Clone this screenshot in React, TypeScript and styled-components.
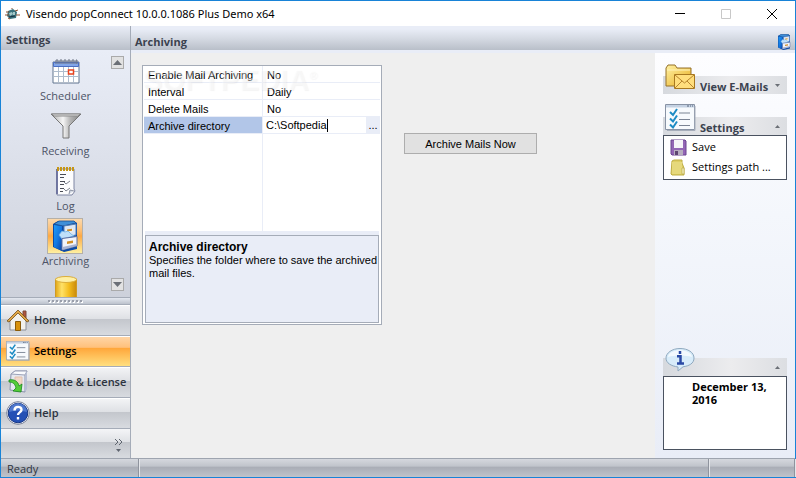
import React from "react";
import styled, { createGlobalStyle, css } from "styled-components";

const EDGE = "#a5acb8";
const PALE = "#e9edf7";

const GlobalStyle = createGlobalStyle`
  *, *::before, *::after { box-sizing: border-box; }
  body {
    margin: 0;
    font-family: "Open Sans", "Noto Sans", sans-serif;
    font-size: 11px;
    line-height: 14px;
    color: #000;
    background: #efefef;
  }
  button, input { font: inherit; color: inherit; margin: 0; padding: 0; border: 0; background: none; }
  h1, h2, h3, p { margin: 0; font: inherit; }
  svg { display: block; flex: none; }
`;

const Window = styled.div`
  display: flex;
  flex-direction: column;
  height: 100vh;
  border: 1px solid #1883d7;
  background: #efefef;
`;

const TitleBar = styled.header`
  display: flex;
  align-items: center;
  flex: none;
  height: 25px;
  padding-left: 4px;
  gap: 6px;
  background: #fff;
`;

const Title = styled.h1`
  && { flex: 1; font-family: "Noto Sans", sans-serif; font-size: 11px; line-height: 16px; }
`;

const ControlRow = styled.div`
  display: flex;
`;

const WindowButton = styled.button`
  display: grid;
  place-items: center;
  width: 46px;
  height: 25px;
  color: #000;
  &:disabled { color: #c8c8c8; }
`;

const Body = styled.div`
  display: flex;
  flex: 1;
  min-height: 0;
`;

const Sidebar = styled.nav`
  display: flex;
  flex-direction: column;
  flex: none;
  width: 130px;
  border-right: 1px solid ${EDGE};
`;

const barTone = "linear-gradient(#e9edf7, #d5dae3 45%, #b9bfc9)";

const SideHeader = styled.h2`
  && {
    flex: none;
    height: 24px;
    padding: 7px 5px 0;
    font-weight: 700;
    line-height: 14px;
    color: #3b424f;
    background: ${barTone};
  }
`;

const Shortcuts = styled.div`
  position: relative;
  flex: 1;
  min-height: 0;
  overflow: hidden;
  background: linear-gradient(#e9edf7, #cdd1db);
`;

const ShortcutList = styled.div`
  display: flex;
  flex-direction: column;
  align-items: center;
  gap: 5px;
  padding-top: 3px;
`;

const Shortcut = styled.button`
  display: flex;
  flex-direction: column;
  align-items: center;
  flex: none;
  color: #4d5467;
`;

const ShortcutIcon = styled.span<{ $on?: boolean }>`
  display: grid;
  place-items: center;
  width: 36px;
  height: 36px;
  border: 1px solid transparent;
  ${(p) =>
    p.$on &&
    css`
      border-color: #b5b0a8;
      background: linear-gradient(#fcd9ac, #fdbd71 35%, #fda944 50%, #fff0a0);
    `}
`;

const Scroller = styled.button<{ $end?: boolean }>`
  position: absolute;
  right: 6px;
  ${(p) => (p.$end ? "bottom: 6px;" : "top: 6px;")}
  display: grid;
  place-items: center;
  width: 13px;
  height: 13px;
  && { border: 1px solid #aaa; background: #e2e2e2; }
`;

const Splitter = styled.div`
  display: grid;
  place-items: center;
  flex: none;
  height: 8px;
  border-top: 1px solid ${EDGE};
  border-bottom: 1px solid ${EDGE};
  background: linear-gradient(#e4e8f0, #bcc2cc);
`;

const metal = "linear-gradient(#f4f5f7, #dfe1e5 45%, #c3c6cc 46%, #d8dbe0)";
const amber = "linear-gradient(#ffd7aa, #ffc17c 38%, #ffa63a 40%, #ffdf80)";

const NavButton = styled.button<{ $on?: boolean }>`
  && {
    display: flex;
    align-items: center;
    flex: none;
    gap: 4px;
    height: 31px;
    padding-left: 5px;
    border-bottom: 1px solid ${EDGE};
    font-weight: 600;
    text-align: left;
    white-space: nowrap;
    color: ${(p) => (p.$on ? "#000" : "#2c333f")};
    background: ${(p) => (p.$on ? amber : metal)};
    box-shadow: inset 0 1px #fff;
  }
`;

const Overflow = styled.div`
  display: flex;
  justify-content: flex-end;
  flex: none;
  height: 29px;
  padding: 5px 7px 0 0;
  background: ${metal};
`;

const Main = styled.main`
  display: flex;
  flex-direction: column;
  flex: 1;
  min-width: 0;
`;

const MainHeader = styled.div`
  display: flex;
  align-items: center;
  justify-content: space-between;
  flex: none;
  height: 27px;
  padding: 4px 3px 0 4px;
  border-top: 3px solid ${PALE};
  border-bottom: 3px solid ${PALE};
  background: ${barTone};
`;

const MainTitle = styled.h2`
  && { font-weight: 700; color: #3b424f; }
`;

const Content = styled.div`
  display: flex;
  flex: 1;
  min-height: 0;
`;

const Work = styled.section`
  display: flex;
  align-items: flex-start;
  flex: 1;
  gap: 22px;
  padding: 12px 11px;
`;

const PropertyBox = styled.div`
  position: relative;
  display: flex;
  flex-direction: column;
  width: 240px;
  height: 260px;
  border: 1px solid ${EDGE};
  padding: 0 1px 1px;
  background: #fff;
  font-family: "Liberation Sans", Arial, sans-serif;
  font-size: 11px;
  line-height: 13px;
`;

const PropertyTable = styled.table`
  flex: none;
  width: 100%;
  border-collapse: separate;
  border-spacing: 0;
  table-layout: fixed;
`;

const NameCell = styled.th<{ $on?: boolean }>`
  width: 119px;
  height: 17px;
  padding: 2px 4px 0;
  border-right: 1px solid ${PALE};
  border-bottom: 1px solid ${PALE};
  font-weight: 400;
  text-align: left;
  white-space: nowrap;
  background: ${(p) => (p.$on ? "#b2c6e8" : "transparent")};
`;

const ValueCell = styled.td<{ $edit?: boolean }>`
  height: 17px;
  padding: ${(p) => (p.$edit ? "0 0 0 3px" : "2px 0 0 4px")};
  border-bottom: 1px solid ${PALE};
`;

const Editor = styled.div`
  display: flex;
  align-items: center;
`;

const PathInput = styled.input`
  field-sizing: content;
  height: 15px;
  outline: none;
`;

const Caret = styled.span`
  width: 1px;
  height: 13px;
  background: #000;
`;

const BrowseButton = styled.button`
  && {
    width: 14px;
    height: 16px;
    margin-left: auto;
    background: ${PALE};
  }
`;

const Spare = styled.div`
  flex: 1;
  width: 119px;
  border-right: 1px solid ${PALE};
`;

const Help = styled.div`
  flex: none;
  height: 92px;
  margin: 0 1px;
  padding-top: 4px;
  background: ${PALE};
`;

const HelpInner = styled.div`
  height: 88px;
  padding: 4px 0 4px 3px;
  border: 1px solid ${EDGE};
`;

const HelpTitle = styled.h3`
  && { font-size: 12px; font-weight: 700; line-height: 14px; }
`;

const Watermark = styled.div`
  position: absolute;
  top: -2px;
  left: 0;
  font-family: "Liberation Sans", Arial, sans-serif;
  font-size: 29px;
  font-weight: 700;
  line-height: 32px;
  color: rgba(255, 255, 255, 0.35);
  text-shadow: 1px 1px 1px rgba(150, 150, 150, 0.1);
  pointer-events: none;
  sup { font-size: 11px; line-height: 11px; vertical-align: 11px; }
`;

const ArchiveButton = styled.button`
  && {
    width: 133px;
    height: 21px;
    margin-top: 68px;
    border: 1px solid #adadad;
    background: #e1e1e1;
    font-family: "Liberation Sans", Arial, sans-serif;
    font-size: 11px;
  }
`;

const Tasks = styled.aside`
  display: flex;
  flex-direction: column;
  flex: none;
  gap: 23px;
  width: 140px;
  padding: 23px 8px 8px;
  background: linear-gradient(#fdfdff, #f4f7fc 40%, ${PALE});
`;

const Group = styled.section<{ $last?: boolean }>`
  ${(p) => p.$last && "margin-top: auto;"}
`;

const GroupHeader = styled.button`
  && {
    display: flex;
    align-items: flex-end;
    gap: 4px;
    width: 100%;
    height: 18px;
    padding: 0 7px 0 2px;
    font-weight: 700;
    color: #3b424f;
    background: linear-gradient(90deg, #d6d9de, #ececee 55%, #dcdee2);
  }
`;

const GroupIcon = styled.span`
  align-self: flex-end;
  width: 31px;
  padding-bottom: 4px;
`;

const GroupTitle = styled.span`
  flex: 1;
  line-height: 14px;
  text-align: left;
  white-space: nowrap;
`;

const Chevron = styled.span`
  align-self: center;
`;

const GroupBody = styled.div`
  display: flex;
  flex-direction: column;
  padding: 1px 6px 2px;
  border: 1px solid #4a5260;
  background: #fff;
`;

const TaskLink = styled.a`
  display: flex;
  align-items: center;
  gap: 5px;
  height: 20px;
  color: #000;
  text-decoration: none;
  white-space: nowrap;
`;

const News = styled.div`
  height: 74px;
  padding: 3px 16px 0 28px;
  border: 1px solid #4a5260;
  background: #fff;
  font-weight: 700;
  line-height: 13px;
`;

const StatusBar = styled.footer`
  display: flex;
  flex: none;
  height: 19px;
  border-top: 1px solid #9ea4af;
  background: linear-gradient(#d5d8de, #c0c4cb 40%, #a9adb6 45%, #bfc3ca);
  color: #2f3540;
`;

const StatusCell = styled.div<{ $w?: number }>`
  ${(p) => (p.$w ? `flex: none; width: ${p.$w}px;` : "flex: 1;")}
  padding: 3px 6px 0;
  border-right: 1px solid #8f949e;
  box-shadow: 1px 0 #e4e6ea;
`;

const CabinetIcon = ({ size }: { size: number }) => (
  <svg width={size} height={size} viewBox="0 0 32 32">
    <defs>
      <linearGradient id="cabinetSide" x2="1" y2="1">
        <stop offset="0" stopColor="#1f9bf7" />
        <stop offset=".5" stopColor="#1478e2" />
        <stop offset="1" stopColor="#0a3fa0" />
      </linearGradient>
    </defs>
    <path d="M4 4 9 1h16l3 2v26l-13 3-11-5z" fill="#0b4aa6" />
    <path d="m5 5 8 1v25l-8-4z" fill="url(#cabinetSide)" />
    <path d="M5 4 10 1h15l2 2-13 3z" fill="#3f8fd8" stroke="#1c4f93" strokeWidth=".8" />
    <path d="m15 6 12-2v11l-12 2z" fill="#dde6f3" stroke="#4f7db8" />
    <path d="m17 9.500 7-1.200v3L17 12.500z" fill="#f6f1e4" />
    <path d="m18 9.500 5-.8v2l-5 .8z" fill="#d08d26" />
    <path d="m10 15 3-4 3 1 3-1 3 3 3 2-12 3z" fill="#bfe0fa" stroke="#6fb2ea" strokeWidth=".8" />
    <path d="m13 18.500 15-2v9.500l-15 4z" fill="#f1f3fa" stroke="#5d6fa0" />
    <path d="m13.500 27 14-3v2l-14 4z" fill="#a9b3d2" />
    <path d="m18 21.500 6-1v2.500l-6 1z" fill="#d08d26" />
  </svg>
);

const CalendarIcon = () => (
  <svg width="28" height="26" viewBox="0 0 28 26">
    <path d="M1 4h26v21H1z" fill="#fff" stroke="#60748f" />
    <path d="M1.500 4.500h25v4h-25z" fill="#82a6e8" stroke="#4b6fc3" />
    <path d="M6.500 9v15M11.500 9v15M16.500 9v15M21.500 9v15M2 13.500h24M2 18.500h24" stroke="#aebccd" />
    <path d="M4 6V2h2v4M8 6V2h2v4M12 6V2h2v4M16 6V2h2v4M20 6V2h2v4M24 6V2h1v4" fill="none" stroke="#6c7485" />
    <path d="M16.500 12h5v4h-5z" fill="#fff" stroke="#e8421d" strokeWidth="1.500" />
  </svg>
);

const FunnelIcon = () => (
  <svg width="32" height="28" viewBox="0 0 32 28">
    <defs>
      <linearGradient id="steel">
        <stop offset="0" stopColor="#a9a9a9" />
        <stop offset=".4" stopColor="#f5f5f5" />
        <stop offset=".65" stopColor="#b4b4b4" />
        <stop offset="1" stopColor="#808080" />
      </linearGradient>
    </defs>
    <path d="M1 2h30L19 14v12h-6V14z" fill="url(#steel)" stroke="#777" />
    <path d="M2 2h28l-2 2H4z" fill="#dcdcdc" stroke="#8c8c8c" />
  </svg>
);

const LogIcon = () => (
  <svg width="22" height="30" viewBox="0 0 22 30">
    <path d="M2 3h17v20l1 2-3 4H2z" fill="#fcfcfd" stroke="#7f86a3" />
    <path d="M2 28V3" stroke="#5a5f92" strokeWidth="1.500" />
    <path d="M3 5V1M6 5V1M9 5V1M12 5V1M15 5V1M18 5V1" stroke="#c69616" strokeWidth="2" />
    <path d="M5 8.500h6M5 11.500h4M5 15.500h5M5 18.500h4M5 22.500h4M5 25.500h3" stroke="#4a4d56" />
    <path d="m9 16 2 2 4-3M9 23l2 2 4-3" fill="none" stroke="#7d828e" />
    <path d="m14 28 1-4 4 1" fill="#d5dbe5" stroke="#8c93a4" />
  </svg>
);

const DatabaseIcon = () => (
  <svg width="24" height="32" viewBox="0 0 24 32">
    <defs>
      <linearGradient id="gold">
        <stop offset="0" stopColor="#e0a516" />
        <stop offset=".3" stopColor="#ffe268" />
        <stop offset=".65" stopColor="#f3bb1c" />
        <stop offset="1" stopColor="#c98a0c" />
      </linearGradient>
    </defs>
    <path d="M1.500 4v24c3 4 18 4 21 0V4z" fill="url(#gold)" stroke="#cf9a24" />
    <ellipse cx="12" cy="4.500" rx="10.500" ry="3" fill="#fff0a4" stroke="#dcae3a" />
  </svg>
);

const HouseIcon = () => (
  <svg width="24" height="24" viewBox="0 0 24 24">
    <path d="M4 11v11h16V11l-8-7z" fill="#f2f1ec" stroke="#8c8f98" />
    <path d="M17 3h3v7l-3-3z" fill="#b0543c" stroke="#7d4a3a" />
    <path d="m1 13 11-11 11 11-2 1-9-9-9 9z" fill="#e0a646" stroke="#755018" strokeWidth=".8" />
    <path d="M9.500 13.500h5v9h-5z" fill="#d8920c" stroke="#8c5c08" />
  </svg>
);

const ChecklistIcon = ({ width, height }: { width: number; height: number }) => (
  <svg width={width} height={height} viewBox="0 0 31 27" preserveAspectRatio="none">
    <path d="M.5.5h29v25H.5z" fill="#f7fafd" stroke="#8893a5" />
    <path d="M1 1h28v2.500H1z" fill="#c5d2e3" />
    <path d="M22 2h2M25 2h1M27 2h1" stroke="#56647a" />
    <path d="M30 2v24.500H2" fill="none" stroke="#a6adba" />
    <path d="M14 9h11M14 15.500h11M14 21.500h11" stroke="#7b8494" strokeWidth="1.200" />
    <path d="m5 8 3 3 4-6M5 14.500l3 3 4-6M5 20.500l3 3 4-6" fill="none" stroke="#1c8bc4" strokeWidth="2" />
  </svg>
);

const UpdateIcon = () => (
  <svg width="24" height="24" viewBox="0 0 24 24">
    <path d="m5 4 4-3h12l-2 4v17L4 20z" fill="#e5e8f0" stroke="#8b92aa" />
    <path d="m5 4 14 1M5 4l4-3h12l-2 4" fill="#fafbfd" stroke="#9aa1b7" />
    <path d="m19 5 2-4v18l-2 3z" fill="#b7bfd5" />
    <path d="M9 7h7v7H9z" fill="#f0d7c5" stroke="#e4c2ae" />
    <path d="M3 10c5-1 9 1 10 6l3-2-1 8-8-1 3-3c-1-4-3-6-7-6z" fill="#55cc38" stroke="#15861a" strokeWidth=".8" />
  </svg>
);

const HelpIcon = () => (
  <svg width="24" height="24" viewBox="0 0 24 24">
    <circle cx="12" cy="12" r="11.300" fill="#fff" stroke="#777f96" />
    <circle cx="12" cy="12" r="9.800" fill="#2450b5" stroke="#133585" />
    <path d="M3 11a9 9 0 0 1 18 0c-6-2-12-2-18 0z" fill="#6a92df" opacity=".6" />
    <path d="M8.500 9.500c0-5 7-4.500 7-.800 0 2.800-3.500 2.600-3.500 5.300M12 16v2.500" fill="none" stroke="#fff" strokeWidth="2.400" />
  </svg>
);

const MailFolderIcon = () => (
  <svg width="31" height="26" viewBox="0 0 31 26">
    <defs>
      <linearGradient id="folder" x2="1" y2="1">
        <stop offset="0" stopColor="#fff2a5" />
        <stop offset="1" stopColor="#e8ac20" />
      </linearGradient>
    </defs>
    <path d="M1 4 3 1h7l2 3h14v18H1z" fill="url(#folder)" stroke="#94712b" />
    <path d="M2 6h23" stroke="#fff4bd" />
    <path d="M9.500 10.500h20v14h-20z" fill="#ffde7d" stroke="#a87820" />
    <path d="m10 24 7-7M29 24l-7-7M10 11l9.500 8L29 11" fill="none" stroke="#b7842d" />
  </svg>
);

const InfoIcon = () => (
  <svg width="31" height="24" viewBox="0 0 31 24">
    <path d="M15 .5c8 0 14 4 14 9.500s-5 8-11 8.800L13 23v-4C6 18 1 15 1 10S7 .5 15 .5z" fill="#d8ecfa" stroke="#8fa9bf" />
    <path d="M3 9c1-9 23-9 24 0-7-2-17-2-24 0z" fill="#fff" opacity=".7" />
    <path d="M15 3v3M12 8.200h3.500v7M12 15.500h7" fill="none" stroke="#2a4aa5" strokeWidth="2.500" />
  </svg>
);

const SaveIcon = () => (
  <svg width="17" height="17" viewBox="0 0 17 17">
    <path d="M1 1h14l1 1v14H2l-1-1z" fill="#9365b5" stroke="#6b4590" />
    <path d="M4 1h9v8H4z" fill="#f5f3f8" />
    <path d="M4 11h9v5H4z" fill="#b7aebf" />
    <path d="M5 12h3v4H5z" fill="#5d4570" />
  </svg>
);

const FolderIcon = () => (
  <svg width="17" height="17" viewBox="0 0 17 17">
    <path d="m2 2 2-1h8v3l2 5v7H2l-1-1z" fill="#dfcf65" stroke="#bfae45" />
    <path d="M2 3h10v12H2z" fill="#e6d97c" />
    <path d="M12 9h2v6h-2z" fill="#f8f2c2" stroke="#b4a33d" strokeWidth=".6" />
  </svg>
);

const AppIcon = () => (
  <svg width="15" height="12" viewBox="0 0 15 12">
    <path d="m3 3 5-2 4 3-1 6-6 1-3-3z" fill="#39717b" />
    <path d="M1 4h3M0 7h4M10 3l3-1M11 7h4M7 1V0M3 10l2 1" stroke="#8b5132" />
    <path d="m4 5 3-1 1 2-3 2zM8 4h2v3H8z" fill="#a4c9c9" />
    <path d="m4 9 6-1" stroke="#182f40" />
  </svg>
);

const Arrow = ({ down, w = 9 }: { down?: boolean; w?: number }) => (
  <svg width={w} height={w > 6 ? 5 : 3} viewBox="0 0 10 5" preserveAspectRatio="none">
    <path d={down ? "M0 0h10L5 5z" : "M0 5h10L5 0z"} fill="#6b6f76" />
  </svg>
);

const shortcuts = [
  { label: "Scheduler", icon: <CalendarIcon /> },
  { label: "Receiving", icon: <FunnelIcon /> },
  { label: "Log", icon: <LogIcon /> },
  { label: "Archiving", icon: <CabinetIcon size={32} />, on: true },
];

const sections = [
  { label: "Home", icon: <HouseIcon /> },
  { label: "Settings", icon: <ChecklistIcon width={24} height={20} />, on: true },
  { label: "Update & License", icon: <UpdateIcon /> },
  { label: "Help", icon: <HelpIcon /> },
];

const properties = [
  ["Enable Mail Archiving", "No"],
  ["Interval", "Daily"],
  ["Delete Mails", "No"],
];

export default function App() {
  return (
    <>
      <GlobalStyle />
      <Window>
        <TitleBar>
          <AppIcon />
          <Title>Visendo popConnect 10.0.0.1086 Plus Demo x64</Title>
          <ControlRow>
            <WindowButton aria-label="Minimize">
              <svg width="10" height="10" viewBox="0 0 10 10"><path d="M0 4.500h10" stroke="currentColor" /></svg>
            </WindowButton>
            <WindowButton aria-label="Maximize" disabled>
              <svg width="10" height="10" viewBox="0 0 10 10"><path d="M.5.5h9v9h-9z" fill="none" stroke="currentColor" /></svg>
            </WindowButton>
            <WindowButton aria-label="Close">
              <svg width="10" height="10" viewBox="0 0 10 10"><path d="m0 0 10 10M10 0 0 10" stroke="currentColor" /></svg>
            </WindowButton>
          </ControlRow>
        </TitleBar>
        <Body>
          <Sidebar>
            <SideHeader>Settings</SideHeader>
            <Shortcuts>
              <ShortcutList>
                {shortcuts.map((s) => (
                  <Shortcut key={s.label}>
                    <ShortcutIcon $on={s.on}>{s.icon}</ShortcutIcon>
                    {s.label}
                  </Shortcut>
                ))}
                <Shortcut aria-label="Database">
                  <ShortcutIcon><DatabaseIcon /></ShortcutIcon>
                </Shortcut>
              </ShortcutList>
              <Scroller aria-label="Scroll up"><Arrow /></Scroller>
              <Scroller $end aria-label="Scroll down"><Arrow down /></Scroller>
            </Shortcuts>
            <Splitter>
              <svg width="35" height="3" viewBox="0 0 35 3">
                <path d="M1 2h34" stroke="#fff" strokeWidth="2" strokeDasharray="2 2" />
                <path d="M0 1h34" stroke="#9a9fab" strokeWidth="2" strokeDasharray="2 2" />
              </svg>
            </Splitter>
            {sections.map((s) => (
              <NavButton key={s.label} $on={s.on}>
                {s.icon}
                {s.label}
              </NavButton>
            ))}
            <Overflow>
              <button aria-label="Configure buttons">
                <svg width="9" height="14" viewBox="0 0 9 14">
                  <path d="m1 0 3 3-3 3M5 0l3 3-3 3" fill="none" stroke="#5f656f" />
                  <path d="M2 10h5l-2.500 3z" fill="#5f656f" />
                </svg>
              </button>
            </Overflow>
          </Sidebar>
          <Main>
            <MainHeader>
              <MainTitle>Archiving</MainTitle>
              <CabinetIcon size={16} />
            </MainHeader>
            <Content>
              <Work>
                <PropertyBox>
                  <PropertyTable>
                    <tbody>
                      {properties.map(([name, value]) => (
                        <tr key={name}>
                          <NameCell scope="row">{name}</NameCell>
                          <ValueCell>{value}</ValueCell>
                        </tr>
                      ))}
                      <tr>
                        <NameCell scope="row" $on>
                          <label htmlFor="archive-path">Archive directory</label>
                        </NameCell>
                        <ValueCell $edit>
                          <Editor>
                            <PathInput id="archive-path" defaultValue="C:\Softpedia" />
                            <Caret />
                            <BrowseButton aria-label="Browse">...</BrowseButton>
                          </Editor>
                        </ValueCell>
                      </tr>
                    </tbody>
                  </PropertyTable>
                  <Spare />
                  <Help>
                    <HelpInner>
                      <HelpTitle>Archive directory</HelpTitle>
                      <p>Specifies the folder where to save the archived mail files.</p>
                    </HelpInner>
                  </Help>
                  <Watermark aria-hidden="true">SOFTPEDIA<sup>®</sup></Watermark>
                </PropertyBox>
                <ArchiveButton>Archive Mails Now</ArchiveButton>
              </Work>
              <Tasks>
                <Group>
                  <GroupHeader>
                    <GroupIcon><MailFolderIcon /></GroupIcon>
                    <GroupTitle>View E-Mails</GroupTitle>
                    <Chevron><Arrow down w={5} /></Chevron>
                  </GroupHeader>
                </Group>
                <Group>
                  <GroupHeader>
                    <GroupIcon><ChecklistIcon width={31} height={27} /></GroupIcon>
                    <GroupTitle>Settings</GroupTitle>
                    <Chevron><Arrow w={5} /></Chevron>
                  </GroupHeader>
                  <GroupBody>
                    <TaskLink href="#save"><SaveIcon />Save</TaskLink>
                    <TaskLink href="#path"><FolderIcon />Settings path ...</TaskLink>
                  </GroupBody>
                </Group>
                <Group $last>
                  <GroupHeader aria-label="Information">
                    <GroupIcon><InfoIcon /></GroupIcon>
                    <GroupTitle />
                    <Chevron><Arrow w={5} /></Chevron>
                  </GroupHeader>
                  <News>December 13, 2016</News>
                </Group>
              </Tasks>
            </Content>
          </Main>
        </Body>
        <StatusBar>
          <StatusCell $w={138}>Ready</StatusCell>
          <StatusCell />
          <StatusCell $w={86} />
        </StatusBar>
      </Window>
    </>
  );
}
